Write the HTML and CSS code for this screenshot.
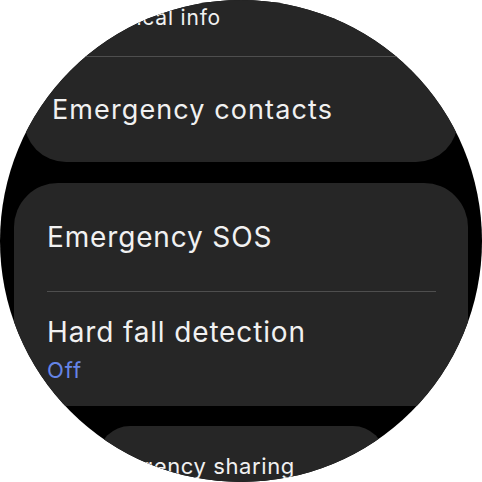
FILE: index.html
```html
<!DOCTYPE html>
<html lang="en">
<head>
  <meta charset="UTF-8" />
  <meta name="viewport" content="width=device-width, initial-scale=1.0"/>
  <title>Safety and emergency</title>
  <link rel="stylesheet" href="styles.css">
</head>
<body>

  <div class="watch">
    <div class="list">

      <section class="card card-top">
        <div class="row row-small">Medical info</div>
        <div class="divider"></div>
        <div class="row row-contacts">Emergency contacts</div>
      </section>

      <section class="card card-main">
        <div class="row row-sos">Emergency SOS</div>
        <div class="divider"></div>
        <div class="row row-fall">
          <div class="title">Hard fall detection</div>
          <div class="status">Off</div>
        </div>
      </section>

      <section class="card card-bottom">
        <div class="row row-sharing">Emergency sharing</div>
      </section>

    </div>
  </div>

</body>
</html>
```

FILE: styles.css
```css
body {
  margin: 0;
  padding: 0;
  background-color: #ffffff;
  font-family: Inter, Roboto, sans-serif;
  color: #f1f1f1;
}

.watch {
  width: 482px;
  height: 482px;
  border-radius: 50%;
  overflow: hidden;
  background-color: #000000;
}

.list {
  display: flex;
  flex-direction: column;
  gap: 21px;
}

.card {
  background-color: #262626;
  border-radius: 42px;
}

.divider {
  height: 1px;
  background-color: #4e4e4e;
}

.row {
  font-size: 27px;
  line-height: 32px;
  letter-spacing: 1.1px;
}

/* top card, partly scrolled off */
.card-top {
  margin: -25px 24px 0 24px;
  padding-top: 30px;
}

.card-top .row {
  padding: 0 28px;
}

.card-top .divider {
  margin: 0 30px;
}

.row-small {
  font-size: 21px;
  line-height: 26px;
  letter-spacing: 0.8px;
  padding-bottom: 25px !important;
  padding-left: 66px !important;
}

.row-contacts {
  padding-top: 37px !important;
  padding-bottom: 36px !important;
}

/* middle card */
.card-main {
  margin: 0 14px;
  border-radius: 44px;
}

.card-main .row {
  padding-left: 33px;
  padding-right: 32px;
  font-size: 28px;
  line-height: 34px;
  letter-spacing: 0.85px;
}

.card-main .divider {
  margin: 0 32px 0 33px;
}

.row-sos {
  padding-top: 37px;
  padding-bottom: 37px;
}

.row-fall {
  padding-top: 23px;
  padding-bottom: 23px;
}

.status {
  margin-top: 8px;
  font-size: 22px;
  line-height: 26px;
  letter-spacing: 1px;
  color: #6584e6;
}

/* bottom card, scaled down near the edge */
.card-bottom {
  margin: -1px 97px 0 98px;
  border-radius: 32px;
  padding-top: 26px;
  padding-bottom: 30px;
}

.row-sharing {
  font-size: 22px;
  line-height: 28px;
  letter-spacing: 0.6px;
  text-indent: -14px;
}
```
